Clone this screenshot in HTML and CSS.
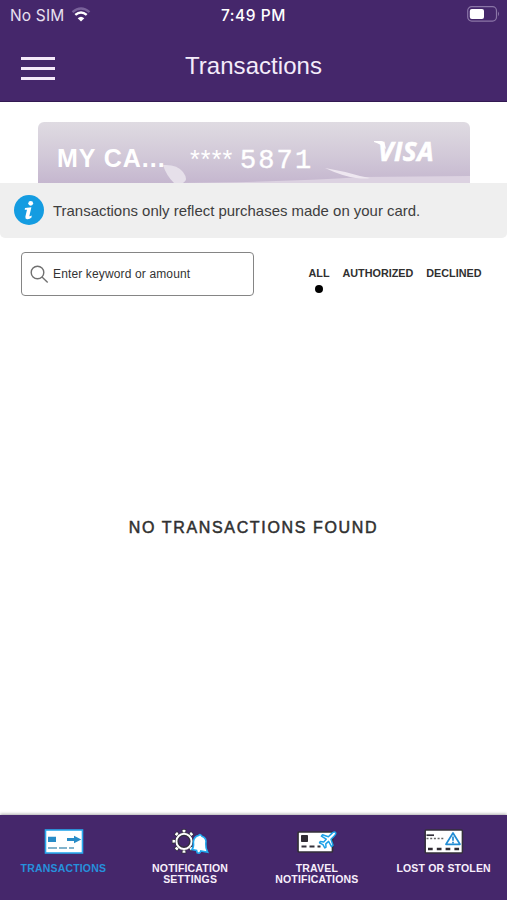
FILE: index.html
```html
<!DOCTYPE html>
<html lang="en">
<head>
<meta charset="utf-8">
<title>Transactions</title>
<link rel="stylesheet" href="styles.css">
</head>
<body>
<div class="app">
  <header class="header">
    <div class="status">
      <div class="carrier"><span>No SIM</span>
        <svg width="20" height="16" viewBox="0 0 20 16" fill="none" stroke="#fff">
          <path d="M1.5 5.2Q10-2 18.5 5.2" stroke="#79629a" stroke-width="2.4"/>
          <path d="M4.3 7.9Q10 3.2 15.7 7.9" stroke-width="2.5"/>
          <path d="M10 14.4L6.7 11.3Q10 8.3 13.3 11.3Z" fill="#fff" stroke="none"/>
        </svg>
      </div>
      <div class="time">7:49 PM</div>
      <svg class="battery" width="34" height="18" viewBox="0 0 34 18">
        <rect x=".7" y="1.7" width="28.8" height="14.4" rx="4" fill="none" stroke="#8b76a7" stroke-width="1.2"/>
        <rect x="2.8" y="3.9" width="14.2" height="10" rx="2" fill="#fff"/>
        <path d="M31 6.6Q33 9 31 11.2Z" fill="#8b76a7"/>
      </svg>
    </div>
    <div class="titlebar">
      <button class="menu" aria-label="Menu"><i></i><i></i><i></i></button>
      <h1>Transactions</h1>
    </div>
  </header>
  <main class="main">
    <section class="card">
      <svg class="art" width="432" height="61" viewBox="0 0 432 61">
        <path d="M125 43Q139 42 145 50Q151 58 145 61H136Q128 53 125 43Z" fill="#e6e0ea"/>
        <path d="M140 61Q250 60 324 55L432 54V61Z" fill="#dcd2e1"/>
        <path d="M287 46Q305 49 322 54L332 56Q328 57 318 56Q304 54 287 46Z" fill="#eee7f0"/>
      </svg>
      <span class="name">MY CA...</span>
      <span class="stars">****</span>
      <span class="digits">5871</span>
      <span class="brand"><svg class="flick" width="14" height="8" viewBox="0 0 14 8"><path d="M0 0H7Q10 0 11 4L12 8Q7 3 0 1Z" fill="#fff"/></svg>VISA</span>
    </section>
    <section class="notice">
      <svg width="30" height="30" viewBox="0 0 30 30">
        <circle cx="15" cy="15" r="15" fill="#149ce1"/>
        <circle cx="16.7" cy="8.3" r="2.4" fill="#fff"/>
        <path d="M11 13L17.4 12.3L15.4 20.7Q15.2 22 17.7 20.6L17.5 22.6Q15.5 24.5 13 24.2Q11 23.8 11.4 21.4L13 14.8H10.7Z" fill="#fff"/>
      </svg>
      <p>Transactions only reflect purchases made on your card.</p>
    </section>
    <section class="tools">
      <div class="search">
        <svg width="19" height="19" viewBox="0 0 19 19" fill="none" stroke="#707070" stroke-width="1.4">
          <circle cx="7.5" cy="7.5" r="6.3"/><path d="M12 12L17.7 17.4"/>
        </svg>
        <span>Enter keyword or amount</span>
      </div>
      <div class="filters">
        <span class="all">ALL<i></i></span><span>AUTHORIZED</span><span>DECLINED</span>
      </div>
    </section>
    <div class="empty"><span>NO TRANSACTIONS FOUND</span></div>
  </main>
  <nav class="nav">
    <a class="item active">
      <svg width="40" height="26" viewBox="0 0 40 26">
        <rect x="1.5" y="1" width="37" height="23" fill="#fff" stroke="#29a8ed" stroke-width="1.6"/>
        <path d="M4 7.7H12V13H4ZM23 9H30V6.7L37.3 10.4L30 14.2V12H23Z" fill="#278bc7"/>
        <path d="M4 19H13M15 19H23M25 19H30" stroke="#5a9abc" stroke-width="1.4"/>
      </svg>
      <span>TRANSACTIONS</span>
    </a>
    <a class="item notify">
      <svg width="38" height="26" viewBox="0 0 38 26">
        <g fill="none">
          <circle cx="12" cy="12.3" r="9.4" stroke="#332f3c" stroke-width="5.6" pathLength="80" stroke-dasharray="5.6 4.4" stroke-dashoffset="2.8"/>
          <circle cx="12" cy="12.3" r="9.4" stroke="#fff" stroke-width="4.2" pathLength="80" stroke-dasharray="3.6 6.4" stroke-dashoffset="1.8"/>
          <circle cx="12" cy="12.3" r="7.2" stroke="#332f3c" stroke-width="3.8"/>
          <circle cx="12" cy="12.3" r="7.6" stroke="#fff" stroke-width="2"/>
        </g>
        <path d="M20 20.5Q22 18 21.4 13Q22 7.5 26.5 6.5Q28.5 4.5 30 7.3Q35 9 33.8 15Q33.5 19 35.6 23.2L28.8 22Q28 25 25.2 23.8L24.6 21.4Z" fill="#fff" stroke="#20a8ee" stroke-width="1.6"/>
      </svg>
      <span>NOTIFICATION<br>SETTINGS</span>
    </a>
    <a class="item travel">
      <svg width="40" height="26" viewBox="0 0 40 26">
        <rect x="1" y="3" width="34.5" height="20" rx="1" fill="#fff" stroke="#34303a" stroke-width="1.7"/>
        <rect x="4" y="6" width="7" height="7" rx=".8" fill="#302c33"/>
        <path d="M4.5 17.5H9.5M12.5 17.5H17.5M20.5 17.5H23.5" stroke="#34303a" stroke-width="2"/>
        <path d="M38.5 3.4Q37 2.2 34.6 4.6L31.4 7.8L25.5 5.8L24.4 7.2L29.2 10.2L26.7 12.9L23.3 12.5L22.5 13.8L26 15.6L27.8 19L29 18.2L28.8 14.9L31.6 12.4L34.5 17.6L36 16.3L34 10.2L37.2 7Q39.5 4.8 38.5 3.4Z" fill="#fff" stroke="#1ca1e8" stroke-width="1.5" stroke-linejoin="round"/>
      </svg>
      <span>TRAVEL<br>NOTIFICATIONS</span>
    </a>
    <a class="item lost">
      <svg width="40" height="26" viewBox="0 0 40 26">
        <rect x="1.2" y="1" width="37.2" height="23" rx="1" fill="#fff" stroke="#34303a" stroke-width="1.5"/>
        <path d="M2.5 6.2H10" stroke="#34303a" stroke-width="1.7"/>
        <path d="M2.5 9.5H20" stroke="#666" stroke-width="1.6" stroke-dasharray="2 1.7"/>
        <path d="M4 20H36" stroke="#302c33" stroke-width="2.5" stroke-dasharray="4.7 4.1"/>
        <path d="M29 4L36 15.3H22Z" fill="#fff" stroke="#218cd4" stroke-width="1.7" stroke-linejoin="round"/>
        <path d="M29 7.4V11.8M29 12.8V14.4" stroke="#218cd4" stroke-width="1.7"/>
      </svg>
      <span>LOST OR STOLEN</span>
    </a>
  </nav>
</div>
</body>
</html>
```
FILE: styles.css
```css
* { box-sizing: border-box; }
body { margin: 0; font-family: "Liberation Sans", Arial, sans-serif; background: #fff; }
svg { display: block; flex: none; }
h1, p { margin: 0; }
.app { width: 507px; height: 900px; display: flex; flex-direction: column; overflow: hidden; }
.header { height: 102px; background: #45276b; border-bottom: 1px solid #321952; color: #fff; }
.status { height: 30px; display: grid; grid-template-columns: 1fr auto 1fr; align-items: center; font-family: Inter, sans-serif; font-size: 15.5px; }
.carrier { display: flex; align-items: center; gap: 7px; padding-left: 10px; color: #e8e0f0; letter-spacing: .15px; }
.time { font-weight: 500; letter-spacing: .55px; }
.battery { justify-self: end; margin-right: 6px; margin-top: -2px; }
.titlebar { height: 71px; display: grid; grid-template-columns: 55px 1fr 55px; align-items: start; }
.menu { margin: 27px 0 0 21px; padding: 0; border: 0; background: none; width: 34px; display: flex; flex-direction: column; gap: 7px; }
.menu i { display: block; height: 3px; width: 34px; background: #f4e9fa; }
.titlebar h1 { margin-top: 21px; text-align: center; font-size: 24px; line-height: 30px; font-weight: 400; color: #f4ecfa; letter-spacing: .05px; }
.main { flex: 1; display: flex; flex-direction: column; }
.card { position: relative; margin: 20px 37px 0 38px; height: 61px; border-radius: 6px 6px 0 0; overflow: hidden; display: flex; align-items: flex-start; color: #fff; background: linear-gradient(#dfdbe2, #d2c9d8 55%, #c5b7cf); }
.art { position: absolute; inset: 0; }
.card span { position: relative; white-space: nowrap; }
.name { width: 133px; margin: 21px 0 0 19px; font: bold 25px/30px "Liberation Sans", sans-serif; letter-spacing: .95px; }
.stars { width: 50px; margin-top: 24px; font: 25px/26px "Liberation Sans", sans-serif; letter-spacing: 1.1px; }
.digits { width: 138px; margin-top: 24px; font: 27px/30px "Liberation Mono", monospace; letter-spacing: 2.1px; -webkit-text-stroke: .4px #fff; }
.brand { margin-top: 14px; font: italic bold 26px/30px "Open Sans", sans-serif; letter-spacing: .6px; -webkit-text-stroke: .6px #fff; }
.flick { position: absolute; left: -4px; top: 5px; }
.notice { height: 55px; background: #efefef; display: flex; align-items: center; gap: 9px; padding: 0 0 1px 14px; border-radius: 0 0 5px 5px; color: #3e3e3e; font-size: 14.95px; }
.tools { margin-top: 14px; height: 44px; display: flex; padding-left: 21px; }
.search { width: 233px; height: 44px; border: 1.5px solid #858585; border-radius: 4px; display: flex; align-items: center; gap: 4px; padding-left: 8px; font-size: 12px; letter-spacing: .14px; color: #333; }
.filters { margin-left: 54.5px; padding-top: 14px; display: flex; gap: 13px; font-size: 10.8px; line-height: 14px; font-weight: bold; color: #303030; white-space: nowrap; }
.all { display: flex; flex-direction: column; align-items: center; }
.all i { width: 8px; height: 8px; border-radius: 50%; background: #000; margin-top: 5px; }
.empty { height: 464px; display: flex; justify-content: center; align-items: center; font-size: 16px; letter-spacing: 1.65px; color: #303030; -webkit-text-stroke: .5px #303030; }
.nav { height: 85px; background: #45276b; display: grid; grid-template-columns: repeat(4, 1fr); box-shadow: 0 -1px 3px #aaa; }
.item { padding-top: 14px; display: flex; flex-direction: column; align-items: center; gap: 8px; text-align: center; color: #f8effb; font-size: 10.5px; line-height: 11px; letter-spacing: .18px; font-weight: bold; white-space: nowrap; }
.active { color: #2690dc; }
.active svg { margin-left: 2px; }
.notify svg { margin-left: 2px; }
```
